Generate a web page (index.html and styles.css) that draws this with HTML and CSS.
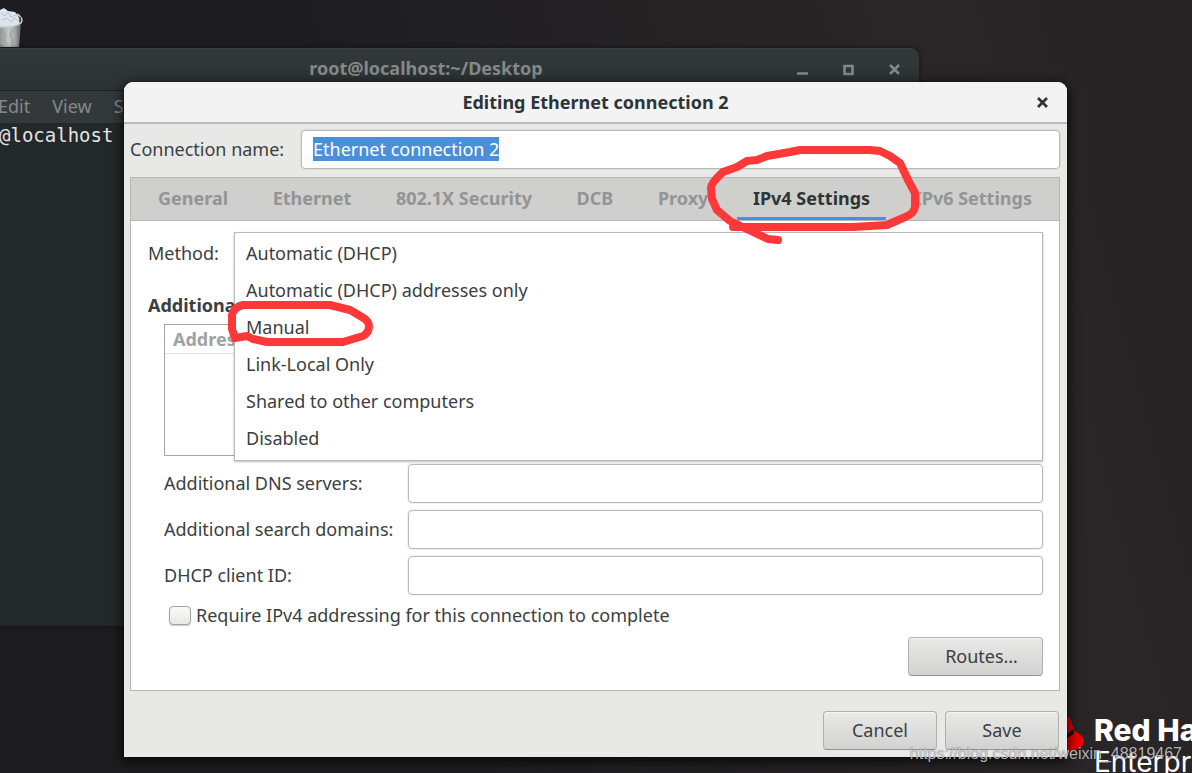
FILE: index.html
```html
<!DOCTYPE html>
<html lang="en">
<head>
<meta charset="utf-8">
<title>Editing Ethernet connection 2</title>
<link rel="stylesheet" href="styles.css">
</head>
<body>
<main class="desktop">
  <svg class="trash" width="26" height="48" viewBox="0 0 26 48" aria-hidden="true">
    <defs>
      <linearGradient id="can" x1="0" x2="1"><stop offset="0" stop-color="#8f9693"/><stop offset=".4" stop-color="#c3c8c6"/><stop offset=".7" stop-color="#a3aaa7"/><stop offset="1" stop-color="#5d6563"/></linearGradient>
    </defs>
    <path d="M0 22H21L19 47H0Z" fill="url(#can)"/>
    <path d="M3 31l3 4-2 5 3 4M12 30l-2 5 3 5-1 5" stroke="#939a97" fill="none"/>
    <path d="M0 10L4 8 8 11 15 12 18 16 20 20 19 25Q10 28 0 27Z" fill="#dfe3f0"/>
    <path d="M1 13l4 3 3-4 3 5 5-2M2 20l5-2 4 4 4-4 3 3" stroke="#b9c0d6" fill="none"/>
    <path d="M17 14Q24 18 21 23Q15 27 0 27" fill="none" stroke="#c9cdca" stroke-width="1.5"/>
    <path d="M20 17v5" stroke="#41464a" stroke-width="1.5"/>
  </svg>

  <section class="brand" aria-label="Red Hat Enterprise">
    <svg class="hat" width="34" height="40" viewBox="0 0 34 40" aria-hidden="true">
      <path d="M0 2H14Q19 3 20 6L23 17Q33 21 33 28Q31 36 16 37L0 35Z" fill="#e00"/>
      <path d="M0 21Q15 24 22 15L23 19Q19 25 0 27Z" fill="#111"/>
    </svg>
    <div class="brand-text"><span class="brand-name">Red Hat</span><span class="brand-sub">Enterprise</span></div>
  </section>

  <section class="terminal">
    <header class="term-bar">
      <h2>root@localhost:~/Desktop</h2>
      <div class="term-controls">
        <button aria-label="Minimize"><svg width="13" height="13" viewBox="0 0 13 13"><path d="M1 10.500H12" stroke="currentColor" stroke-width="2.500"/></svg></button>
        <button aria-label="Maximize"><svg width="13" height="13" viewBox="0 0 13 13"><path d="M2.500 3H10.500V11H2.500Z" fill="none" stroke="currentColor" stroke-width="2.500"/></svg></button>
        <button aria-label="Close"><svg width="13" height="13" viewBox="0 0 13 13"><path d="M2 2L11 11M11 2L2 11" stroke="currentColor" stroke-width="2.500"/></svg></button>
      </div>
    </header>
    <nav class="term-menu"><button>Edit</button><button>View</button><button>Search</button></nav>
    <p class="prompt">@localhost</p>
  </section>

  <section class="dialog" role="dialog" aria-labelledby="dialog-title">
    <header class="dialog-bar">
      <h1 id="dialog-title">Editing Ethernet connection 2</h1>
      <button class="close" aria-label="Close"><svg width="13" height="13" viewBox="0 0 13 13"><path d="M2 2L11 11M11 2L2 11" stroke="currentColor" stroke-width="2.800"/></svg></button>
    </header>
    <div class="dialog-body">
      <div class="name-row">
        <label for="conn">Connection name:</label>
        <input id="conn" class="field" type="text" value="Ethernet connection 2">
      </div>
      <div class="notebook">
        <div class="tabs" role="tablist">
          <button role="tab">General</button>
          <button role="tab">Ethernet</button>
          <button role="tab">802.1X Security</button>
          <button role="tab">DCB</button>
          <button role="tab">Proxy</button>
          <button role="tab" class="active" aria-selected="true">IPv4 Settings</button>
          <button role="tab">IPv6 Settings</button>
        </div>
        <div class="page">
          <div class="method">
            <label for="method">Method:</label>
            <select id="method" class="menu" size="6">
              <option>Automatic (DHCP)</option>
              <option>Automatic (DHCP) addresses only</option>
              <option>Manual</option>
              <option>Link-Local Only</option>
              <option>Shared to other computers</option>
              <option>Disabled</option>
            </select>
          </div>
          <h3>Additional</h3>
          <table class="addresses"><thead><tr><th>Address</th></tr></thead><tbody><tr><td></td></tr></tbody></table>
          <div class="form">
            <label for="dns">Additional DNS servers:</label><input id="dns" class="field" type="text">
            <label for="domains">Additional search domains:</label><input id="domains" class="field" type="text">
            <label for="client">DHCP client ID:</label><input id="client" class="field" type="text">
          </div>
          <label class="require"><input type="checkbox">Require IPv4 addressing for this connection to complete</label>
          <div class="routes-row"><button class="button routes">Routes…</button></div>
        </div>
      </div>
      <footer class="actions"><button class="button">Cancel</button><button class="button">Save</button></footer>
    </div>
  </section>

  <svg class="marks" width="1192" height="773" viewBox="0 0 1192 773" aria-hidden="true">
    <path d="M733 227H853L887 225L903 218Q914 214 915 207V193L908 180L900 163L890 156L880 151L870 150H800L790 152L767 156L757 160L747 161L737 167L723 172Q711 183 711 188L712 199L717 210L730 221L753 232L768 239L778 240"/>
    <path d="M235 338L247 336L253 339L267 342H343L363 336Q369 333 369 326Q369 321 362 317L350 310L330 305H243Q234 307 232 315V329L235 338"/>
  </svg>
  <p class="watermark">https://blog.csdn.net/weixin_48819467</p>
</main>
<script src="app.js"></script>
</body>
</html>
```
FILE: app.js
```js
const connectionName = document.getElementById("conn");
connectionName.focus();
connectionName.select();
```
FILE: styles.css
```css
* { box-sizing: border-box; }
body { margin: 0; font: 18px/24px "Noto Sans", "Open Sans", sans-serif; color: #3a4042; }
button { font: inherit; color: inherit; border: 0; background: none; padding: 0; }
h1, h2, h3, p { margin: 0; font-size: inherit; }
.desktop { position: relative; min-height: 100vh; overflow: hidden; background: linear-gradient(75deg, #1d1d1f 0%, #1d1d1f 35%, #2a2627 80%, #252324 100%); }
.trash { position: absolute; left: 0; top: 0; }

.brand { position: absolute; left: 1051px; top: 714px; display: flex; gap: 9px; color: #fff; }
.brand-text { display: flex; flex-direction: column; font-family: Inter, sans-serif; font-size: 28px; line-height: 32px; white-space: nowrap; }
.brand-name { font-size: 30px; font-weight: 800; }

.terminal { position: absolute; left: -67px; top: 48px; width: 986px; height: 578px; background: #23282a; border-radius: 9px 9px 0 0; color: #858989; box-shadow: 0 0 5px #0008; }
.term-bar { position: relative; height: 43px; display: flex; align-items: center; justify-content: center; padding-bottom: 3px; background: linear-gradient(#33393b, #2c3233); border-bottom: 1px solid #1b1f20; border-top: 1px solid #3b4143; border-radius: 9px 9px 0 0; }
.term-controls { position: absolute; right: 18px; top: 0; height: 100%; display: flex; align-items: center; gap: 33px; }
.term-controls button, .close { display: flex; }
.term-menu { display: flex; gap: 22px; height: 32px; align-items: center; padding: 0 0 2px 65px; background: #33393b; }
.prompt { font: 19px/24px "DejaVu Sans Mono", monospace; color: #e3e3e3; padding-left: 66px; }

.dialog { position: absolute; left: 124px; right: 125px; top: 82px; background: #e8e8e6; border-radius: 9px 9px 0 0; box-shadow: 0 3px 12px 2px #000b, 0 0 1px #000; }
.dialog-bar { position: relative; height: 42px; display: flex; align-items: center; justify-content: center; background: #f3f3f3; border-bottom: 2px solid #b9b9b6; border-radius: 9px 9px 0 0; color: #2e3436; }
.close { position: absolute; right: 18px; }
.dialog-body { padding: 6px 7px 7px 6px; display: flex; flex-direction: column; }
.name-row { display: flex; align-items: center; }
.name-row label { width: 171px; padding-bottom: 2px; }
.field { flex: 1; min-width: 0; height: 39px; border: 1px solid #b9b9b6; border-radius: 4px; background: #fff; font: inherit; color: inherit; padding: 0 10px 1px 11px; outline: 0; box-shadow: 0 0 0 1px #0000000d; }
.field::selection { background: #4a90d9; color: #fff; }
.notebook { margin-top: 8px; border: 1px solid #b5b5b2; background: #fff; }
.tabs { display: flex; justify-content: space-between; height: 43px; padding: 0 11px; background: #cfcfcd; border-bottom: 1px solid #b5b5b2; }
.tabs button { padding: 0 16px 2px; border-bottom: 3px solid transparent; border-top: 3px solid transparent; color: #929595; font-weight: 700; white-space: nowrap; }
.tabs .active { color: #2e3436; border-bottom-color: #4a90d9; }
.page { padding: 11px 16px 14px 17px; }
.method { position: relative; height: 42px; display: flex; align-items: center; }
.menu { position: absolute; z-index: 1; left: 86px; right: 0; top: 0; height: 229px; padding: 2px 0; border: 1px solid #b9b9b6; border-radius: 0; background: #fff; font: inherit; color: inherit; overflow: hidden; outline: 0; box-shadow: 0 1px 2px #0004; }
.menu option { height: 37px; padding: 6px 11px; line-height: 24px; }
.page h3 { margin-top: 19px; }
.addresses { margin: 7px 0 0 16px; width: calc(100% - 16px); height: 132px; border: 1px solid #a5a5a3; border-spacing: 0; }
.addresses th { height: 29px; padding: 0 8px; text-align: left; color: #a0a2a2; border-bottom: 1px solid #e3e3e1; }
.form { display: grid; grid-template-columns: 244px 1fr; row-gap: 7px; align-items: center; margin: 8px 0 0 16px; }
.form label { padding-bottom: 2px; }
.require { display: flex; align-items: center; gap: 5px; margin: 8px 0 0 21px; }
.require input { appearance: none; margin: 0; width: 22px; height: 19px; border: 1px solid #a0a09d; border-radius: 4px; background: linear-gradient(#fafafa, #e8e8e7); box-shadow: 0 1px 1px #0003; }
.routes-row { display: flex; justify-content: flex-end; margin-top: 10px; }
.button { width: 114px; height: 39px; padding-bottom: 1px; border: 1px solid #b1b1ae; border-bottom-color: #929290; border-radius: 4px; background: linear-gradient(#e9e9e7, #d2d2d0); box-shadow: inset 0 1px #fff9; }
.routes { width: 135px; padding-left: 12px; }
.actions { display: flex; justify-content: flex-end; gap: 8px; margin: 20px 1px 0 0; }

.marks { position: absolute; z-index: 2; left: 0; top: 0; pointer-events: none; fill: none; stroke: #fd3838; stroke-width: 8; stroke-linecap: round; stroke-linejoin: round; }
.watermark { position: absolute; right: 10px; bottom: 7px; font: 16px/24px "Liberation Sans", Arial, sans-serif; color: #dededecc; text-shadow: 0 0 1px #0008; }
```
